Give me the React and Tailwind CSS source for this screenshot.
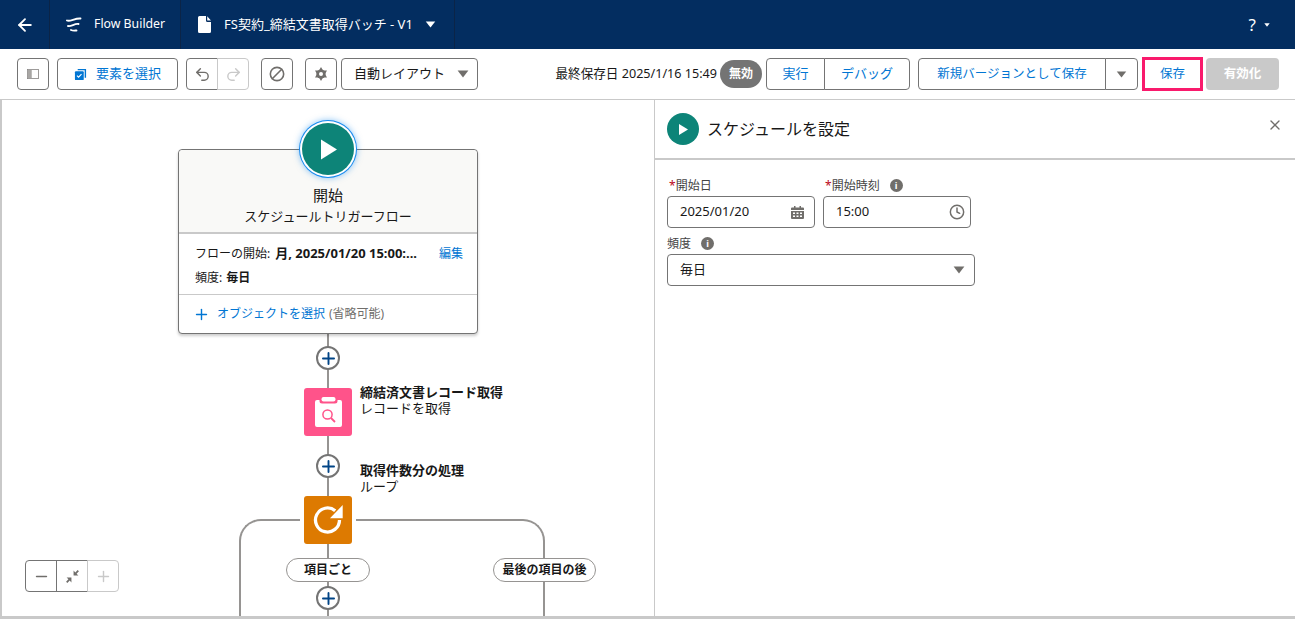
import React from 'react';
import { ArrowLeft, Undo2, Redo2, Ban, X, Clock, Plus, Minus } from 'lucide-react';

const font = { fontFamily: '"Noto Sans", "Noto Sans CJK JP", sans-serif' };

const Caret = ({ className }) => (
  <svg viewBox="0 0 12 8" className={className} fill="currentColor">
    <path d="M0.6 0.6h10.8L6 7.4z" />
  </svg>
);

const Divider = () => <div className="w-px h-full bg-[#0b2447]" />;

const Header = () => (
  <div className="flex items-center h-[49px] shrink-0 bg-[#032d60] text-white">
    <div className="flex items-center justify-center w-[49px] h-full">
      <ArrowLeft size={20} strokeWidth={2.2} />
    </div>
    <Divider />
    <div className="flex items-center w-[130px] h-full pl-[16px]">
      <svg viewBox="0 0 16 16" className="w-[16px] h-[16px]" fill="none" stroke="white" strokeWidth="1.9" strokeLinecap="round">
        <path d="M1 3.5C4 5 9 1 14.5 1.5M2 9c3 1 7-3 10.5-2M5 13c2 1 4 .5 5.5.5" />
      </svg>
      <span className="ml-[12px] text-[12.3px]">Flow Builder</span>
    </div>
    <Divider />
    <div className="flex items-center w-[273px] h-full pl-[17px]">
      <svg viewBox="0 0 13 17" className="w-[13px] h-[17px]" fill="white">
        <path d="M1.5 0H8v4.5A1.5 1.5 0 0 0 9.5 6H13v9.5a1.5 1.5 0 0 1-1.5 1.5h-10A1.5 1.5 0 0 1 0 15.5v-14A1.5 1.5 0 0 1 1.5 0z" />
        <path d="M9.2 0.2L13 4.6H9.6a.4.4 0 0 1-.4-.4z" />
      </svg>
      <span className="ml-[13px] text-[13px] whitespace-nowrap">FS契約_締結文書取得バッチ - V1</span>
      <Caret className="w-[11px] h-[7px] ml-[12px]" />
    </div>
    <Divider />
    <div className="flex items-center ml-auto mr-[25px] gap-[8px]">
      <span className="text-[17px] leading-none">?</span>
      <Caret className="w-[6px] h-[4px]" />
    </div>
  </div>
);

const Box = ({ className = 'justify-center', children }) => (
  <div className={`flex items-center border border-[#747474] bg-white h-[32px] ${className}`}>{children}</div>
);

const Toolbar = () => (
  <div className="flex items-center h-[51px] shrink-0 pl-[17px] pr-[16px] bg-white border-b border-[#c9c9c9]">
    <Box className="justify-center w-[32px] rounded-[4px]">
      <svg viewBox="0 0 14 12" className="w-[12px] h-[10px]">
        <rect x="0.5" y="0.5" width="13" height="11" fill="none" stroke="#8a8886" />
        <rect x="1" y="1" width="4.5" height="10" fill="#a8a6a4" />
      </svg>
    </Box>
    <Box className="justify-center w-[121px] ml-[8px] rounded-[4px] gap-[9px]">
      <svg viewBox="0 0 14 14" className="w-[13px] h-[13px]">
        <path d="M4 2.5V1h9v9.5h-1.5V2.5z" fill="#0176d3" />
        <rect x="1" y="3.5" width="9.5" height="9.5" rx="1" fill="#0176d3" />
        <path d="M3.2 8.2l1.7 1.7 3.2-3.4" fill="none" stroke="white" strokeWidth="1.2" />
      </svg>
      <span className="text-[13px] text-[#0176d3]">要素を選択</span>
    </Box>
    <div className="flex ml-[8px]">
      <Box className="justify-center w-[32px] rounded-l-[4px]">
        <Undo2 size={17} color="#706e6b" strokeWidth={2} />
      </Box>
      <Box className="justify-center w-[32px] -ml-px rounded-r-[4px] !border-[#c9c9c9]">
        <Redo2 size={17} color="#c9c9c9" strokeWidth={2} />
      </Box>
    </div>
    <Box className="justify-center w-[32px] ml-[12px] rounded-[4px]">
      <Ban size={16} color="#706e6b" strokeWidth={2.4} className="-scale-x-100" />
    </Box>
    <Box className="justify-center w-[32px] ml-[12px] rounded-[4px]">
      <svg viewBox="0 0 14 14" className="w-[14px] h-[14px]">
        <path d="M7 0l2 3.5h4L11 7l2 3.5H9L7 14l-2-3.5H1L3 7 1 3.5h4z" fill="#706e6b" />
        <circle cx="7" cy="7" r="4.6" fill="#706e6b" />
        <circle cx="7" cy="7" r="2" fill="white" />
      </svg>
    </Box>
    <Box className="justify-between w-[137px] ml-[4px] rounded-[4px] pl-[12px] pr-[8px]">
      <span className="text-[13px] text-[#181818] whitespace-nowrap">自動レイアウト</span>
      <Caret className="w-[12px] h-[8px] text-[#706e6b]" />
    </Box>
    <span className="ml-auto text-[12.6px] text-[#181818] whitespace-nowrap">最終保存日 2025/1/16 15:49</span>
    <span className="flex items-center justify-center w-[42px] h-[28px] ml-[3px] rounded-full bg-[#747474] text-white text-[12px] font-bold">無効</span>
    <div className="flex ml-[4px]">
      <Box className="justify-center w-[59px] rounded-l-[4px] text-[13px] text-[#0176d3]">実行</Box>
      <Box className="justify-center w-[86px] -ml-px rounded-r-[4px] text-[13px] text-[#0176d3]">デバッグ</Box>
    </div>
    <div className="flex ml-[8px]">
      <Box className="justify-center w-[188px] rounded-l-[4px] text-[12.5px] text-[#0176d3]">新規バージョンとして保存</Box>
      <Box className="justify-center w-[33px] -ml-px rounded-r-[4px]">
        <Caret className="w-[11px] h-[7px] text-[#706e6b]" />
      </Box>
    </div>
    <div className="flex items-center justify-center w-[61px] h-[34px] ml-[4px] border-[3px] border-[#f91a6c] text-[12.5px] text-[#0176d3]">保存</div>
    <div className="flex items-center justify-center w-[73px] h-[32px] ml-[3px] rounded-[4px] bg-[#c9c9c9] text-white text-[12.5px] font-bold">有効化</div>
  </div>
);

const AddNode = ({ top }) => (
  <div className="absolute left-[316px] w-[24px] h-[24px] rounded-full border-2 border-[#747474] bg-white flex items-center justify-center" style={{ top }}>
    <Plus size={19} color="#014486" strokeWidth={2.4} />
  </div>
);

const Pill = ({ className, children }) => (
  <div className={`absolute top-[558px] h-[24px] flex items-center justify-center rounded-full border border-[#969492] bg-white text-[12px] font-bold text-[#181818] whitespace-nowrap ${className}`}>
    {children}
  </div>
);

const StartCard = () => (
  <div className="absolute left-[178px] top-[149px] w-[300px] h-[185px] rounded-[4px] border border-[#747474] bg-white shadow-[0_2px_3px_rgba(0,0,0,0.2)]">
    <div className="h-[84px] pt-[35px] rounded-t-[4px] bg-[#f9f9f7] border-b-2 border-[#c9c9c9] text-center text-[#181818]">
      <div className="text-[15px] leading-[20px]">開始</div>
      <div className="mt-[1px] text-[13px] leading-[20px]">スケジュールトリガーフロー</div>
    </div>
    <div className="h-[61px] pl-[16px] pr-[14px] pt-[8px] border-b border-[#c9c9c9] text-[12px] text-[#181818]">
      <div className="flex items-center h-[24px] whitespace-nowrap">
        <span>フローの開始:</span>
        <span className="ml-[5px] text-[13px] font-bold">月, 2025/01/20 15:00:...</span>
        <span className="ml-auto text-[#0176d3]">編集</span>
      </div>
      <div className="flex items-center h-[24px]">
        <span>頻度:</span>
        <span className="ml-[4px] font-bold">毎日</span>
      </div>
    </div>
    <div className="flex items-center h-[38px] px-[16px] text-[12px] whitespace-nowrap">
      <Plus size={17} color="#0176d3" strokeWidth={2} className="-ml-[2px]" />
      <span className="ml-[7px] text-[#0176d3]">オブジェクトを選択</span>
      <span className="ml-[4px] text-[#706e6b]">(省略可能)</span>
    </div>
  </div>
);

// node coordinates are page coordinates, the inner layer is shifted back by the canvas offset
const Canvas = () => (
  <div className="relative w-[655px] shrink-0 h-full overflow-hidden bg-white border-l-2 border-r border-[#c9c9c9] text-[#181818]">
    <div className="absolute -left-[2px] -top-[100px] w-[655px] h-[719px]">
      <div className="absolute left-[327px] top-[334px] w-[2px] h-[285px] bg-[#969492]" />
      <StartCard />
      <div className="absolute left-[302px] top-[123px] w-[52px] h-[52px] rounded-full bg-[#0d8478] ring-[2px] ring-white shadow-[0_0_0_3px_#1589ee,0_0_6px_3px_rgba(21,137,238,0.5)] flex items-center justify-center">
        <svg viewBox="0 0 16 20" className="w-[16px] h-[25px] ml-[2px]"><path d="M0 0l16 10L0 20z" fill="white" /></svg>
      </div>
      <AddNode top={346} />
      <div className="absolute left-[304px] top-[388px] w-[48px] h-[48px] rounded-[3px] bg-[#ff538a] flex items-center justify-center">
        <svg viewBox="0 0 27 30" className="w-[27px] h-[30px]">
          <rect x="6.5" y="0" width="14" height="4.5" rx="2" fill="white" />
          <path d="M2 3h2.5v1A2.5 2.5 0 0 0 7 6.5h13A2.5 2.5 0 0 0 22.5 4V3H25a2 2 0 0 1 2 2v23a2 2 0 0 1-2 2H2a2 2 0 0 1-2-2V5a2 2 0 0 1 2-2z" fill="white" />
          <circle cx="12.5" cy="17.5" r="4.6" fill="none" stroke="#ff538a" strokeWidth="1.5" />
          <path d="M16 21l4 4" stroke="#ff538a" strokeWidth="1.8" />
        </svg>
      </div>
      <div className="absolute left-[360px] top-[384px] text-[13px] leading-[16px] whitespace-nowrap">
        <div className="font-bold">締結済文書レコード取得</div>
        <div>レコードを取得</div>
      </div>
      <AddNode top={454} />
      <div className="absolute left-[360px] top-[462px] text-[13px] leading-[16px] whitespace-nowrap">
        <div className="font-bold">取得件数分の処理</div>
        <div>ループ</div>
      </div>
      <div className="absolute left-[239px] top-[519px] w-[61px] h-[100px] border-l-2 border-t-2 border-[#969492] rounded-tl-[22px]" />
      <div className="absolute left-[356px] top-[519px] w-[189px] h-[100px] border-r-2 border-t-2 border-[#969492] rounded-tr-[22px]" />
      <div className="absolute left-[304px] top-[496px] w-[48px] h-[48px] rounded-[3px] bg-[#dd7a01] flex items-center justify-center">
        <svg viewBox="0 0 30 30" className="w-[30px] h-[30px]" fill="none">
          <path d="M26.5 15A12 12 0 1 1 22.2 5.8" stroke="white" strokeWidth="3.3" />
          <path d="M29.7 0v13.3H17z" fill="white" />
        </svg>
      </div>
      <Pill className="left-[286px] w-[84px]">項目ごと</Pill>
      <Pill className="left-[493px] w-[103px]">最後の項目の後</Pill>
      <AddNode top={586} />
      <div className="absolute left-[25px] top-[560px] flex h-[32px] text-[#706e6b]">
        <div className="flex items-center justify-center w-[32px] border border-[#747474] rounded-l-[4px] bg-white">
          <Minus size={17} strokeWidth={2} />
        </div>
        <div className="flex items-center justify-center w-[32px] -ml-px border border-[#747474] bg-white">
          <svg viewBox="0 0 14 14" className="w-[15px] h-[15px]" fill="#706e6b">
            <path d="M8 1.5v4.5h4.5L10.8 4.4 13 2.2 11.8 1 9.6 3.2zM6 12.5V8H1.5l1.7 1.6L1 11.8 2.2 13l2.2-2.2z" />
          </svg>
        </div>
        <div className="flex items-center justify-center w-[32px] -ml-px border border-[#c9c9c9] rounded-r-[4px] bg-white">
          <Plus size={17} color="#c9c9c9" strokeWidth={2} />
        </div>
      </div>
    </div>
  </div>
);

const InfoDot = () => (
  <span className="flex items-center justify-center w-[13px] h-[13px] rounded-full bg-[#706e6b] text-white text-[9px] font-bold leading-none">i</span>
);

const Field = ({ label, required, info, className, children }) => (
  <div className={className}>
    <div className="flex items-center h-[21px] text-[12px] text-[#444444]">
      {required && <span className="ml-[2px] text-[#ba0517]">*</span>}
      <span>{label}</span>
      {info && <span className="ml-[10px]"><InfoDot /></span>}
    </div>
    {children}
  </div>
);

const Input = ({ value, icon, pad }) => (
  <div className={`flex items-center justify-between w-[148px] h-[32px] pl-[12px] border border-[#747474] rounded-[4px] bg-white text-[13px] text-[#181818] ${pad}`}>
    <span>{value}</span>
    {icon}
  </div>
);

const CalendarIcon = () => (
  <svg viewBox="0 0 13 13" className="w-[13px] h-[13px]" fill="#706e6b">
    <path d="M3 0h1.5v1.5h4V0H10v1.5h2a1 1 0 0 1 1 1V4H0V2.5a1 1 0 0 1 1-1h2z" />
    <path fillRule="evenodd" d="M0 5h13v7a1 1 0 0 1-1 1H1a1 1 0 0 1-1-1zM2 6.5v1.5h2V6.5zM5.5 6.5v1.5h2V6.5zM9 6.5v1.5h2V6.5zM2 9.5V11h2V9.5zM5.5 9.5V11h2V9.5zM9 9.5V11h2V9.5z" />
  </svg>
);

const Panel = () => (
  <div className="flex-1 h-full bg-white">
    <div className="relative flex items-center h-[60px] pl-[12px] border-b-2 border-[#c9c9c9]">
      <div className="flex items-center justify-center w-[32px] h-[32px] rounded-full bg-[#0d8478]">
        <svg viewBox="0 0 10 12" className="w-[9px] h-[11px] ml-[1px]"><path d="M0 0l10 6-10 6z" fill="white" /></svg>
      </div>
      <span className="ml-[8px] text-[16px] text-[#181818]">スケジュールを設定</span>
      <X size={16} color="#706e6b" strokeWidth={2} className="absolute right-[12px] top-[17px]" />
    </div>
    <div className="pl-[12px] pt-[15px]">
      <div className="flex gap-[8px]">
        <Field label="開始日" required>
          <Input value="2025/01/20" pad="pr-[10px]" icon={<CalendarIcon />} />
        </Field>
        <Field label="開始時刻" required info>
          <Input value="15:00" pad="pr-[5px]" icon={<Clock size={16} color="#706e6b" strokeWidth={2.2} />} />
        </Field>
      </div>
      <Field label="頻度" info className="mt-[5px]">
        <div className="flex items-center justify-between w-[308px] h-[32px] pl-[12px] pr-[9px] border border-[#747474] rounded-[4px] text-[13px] text-[#181818]">
          <span>毎日</span>
          <Caret className="w-[12px] h-[8px] text-[#706e6b]" />
        </div>
      </Field>
    </div>
  </div>
);

export default function App() {
  return (
    <div className="flex flex-col w-[1295px] h-[619px] overflow-hidden bg-white" style={font}>
      <Header />
      <Toolbar />
      <div className="flex flex-1 min-h-0 border-b-[3px] border-[#c9c9c9]">
        <Canvas />
        <Panel />
      </div>
    </div>
  );
}
